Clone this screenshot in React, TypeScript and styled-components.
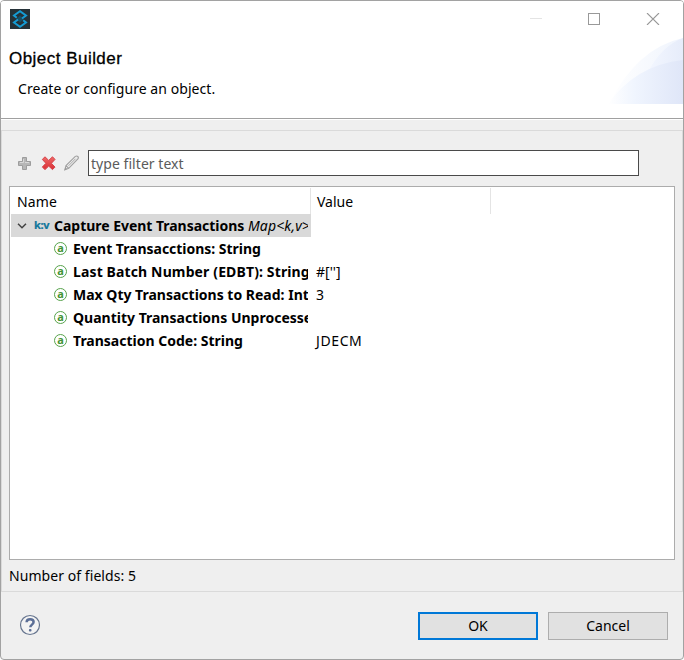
import React from 'react';
import styled, { createGlobalStyle } from 'styled-components';

const Global = createGlobalStyle`
  * { box-sizing: border-box; }
  html, body { margin: 0; background: #fff; overflow: hidden; }
  body { font-family: "Noto Sans", sans-serif; font-size: 14px; line-height: 20px; color: #000; }
`;

const Dialog = styled.div`
  width: 684px;
  height: 660px;
  display: flex;
  flex-direction: column;
  border: 1px solid #a2a2a2;
  border-radius: 4px;
  overflow: hidden;
  background: #efefef;
`;

const Banner = styled.header`
  position: relative;
  flex: none;
  height: 118px;
  background: #fff;
  border-bottom: 1px solid #a0a0a0;
  box-shadow: 0 1px 0 #fff;
`;

const TitleBar = styled.div`
  height: 36px;
  display: flex;
  align-items: center;
  padding: 0 23px 0 9px;
`;

const WindowControls = styled.div`
  display: flex;
  gap: 46px;
  margin-left: auto;
  svg { display: block; }
`;

const Wave = styled.svg`
  position: absolute;
  right: 0;
  top: 36px;
`;

const Title = styled.h1`
  position: relative;
  margin: 11px 0 0 8px;
  font: 500 17px/22px "Liberation Sans", sans-serif;
  -webkit-text-stroke: 0.3px #000;
`;

const Label = styled.span<{ $spacing?: number }>`
  letter-spacing: ${p => p.$spacing ?? 0}px;
  white-space: pre;
`;

const Description = styled.p`
  position: relative;
  margin: 9px 0 0 17px;
`;

const Body = styled.main`
  flex: none;
  height: 462px;
  margin-top: 11px;
  border: 1px solid #dadada;
  padding: 19px 7px 0;
  display: flex;
  flex-direction: column;
`;

const Toolbar = styled.div`
  display: flex;
  height: 26px;
  align-items: center;
  padding-left: 7px;
`;

const Tools = styled.div`
  display: flex;
  gap: 8px;
  margin-right: 8px;
  svg { display: block; }
`;

const FilterInput = styled.div`
  width: 551px;
  height: 26px;
  border: 1px solid #4a4a4a;
  background: #fff;
  color: #5b5b5b;
  padding: 3px 2px 1px;
`;

const Tree = styled.div`
  margin-top: 10px;
  height: 374px;
  width: 666px;
  border: 1px solid #acacac;
  background: #fff;
  padding: 0 1px;
`;

const HeadRow = styled.div`
  display: grid;
  grid-template-columns: 300px 180px 1fr;
  height: 27px;
`;

const HeadCell = styled.div`
  margin-top: 1px;
  border-right: 1px solid #e4e4e4;
  padding: 4px 6px 0;
  &:last-child { border: 0; }
`;

const Row = styled.div`
  display: grid;
  grid-template-columns: 300px 1fr;
  height: 23px;
`;

const NameCell = styled.div<{ $selected?: boolean; $indent: number }>`
  display: flex;
  align-items: center;
  overflow: hidden;
  padding-left: ${p => p.$indent}px;
  background: ${p => (p.$selected ? '#d9d9d9' : 'transparent')};
  svg { flex: none; display: block; }
`;

const NameText = styled.div<{ $gap: number }>`
  flex: 1;
  min-width: 0;
  margin: 0 3px 0 ${p => p.$gap}px;
  overflow: hidden;
  white-space: nowrap;
  font-weight: 700;
  i { font-weight: 400; letter-spacing: 0.15px; }
`;

const ValueCell = styled.div`
  padding: 2px 5px 1px;
`;

const Status = styled.div`
  margin-top: 6px;
`;

const Footer = styled.footer`
  flex: 1;
  display: flex;
  align-items: center;
  padding: 0 15px 0 18px;
  > svg { margin-top: -2px; }
`;

const Buttons = styled.div`
  display: flex;
  gap: 10px;
  margin-left: auto;
`;

const Button = styled.button<{ $primary?: boolean }>`
  width: 120px;
  height: 28px;
  padding: 0;
  border: ${p => (p.$primary ? '2px solid #0078d7' : '1px solid #adadad')};
  background: #e1e1e1;
  color: #000;
  font: inherit;
`;

const AppIcon = () => (
  <svg width="20" height="20" viewBox="0 0 20 20">
    <rect width="20" height="20" fill="#263238" />
    <path d="M10 6.500 13.500 10 10 13.500 6.500 10z" fill="#174f66" />
    <path d="M6.800 8.700 4 6.500 10 2.300l6 4.200-4 3M8 10.500l-4 3 6 4.200 6-4.200-2.800-2.200" fill="none" stroke="#159bd3" strokeWidth="2" />
  </svg>
);

const HeaderWave = () => (
  <Wave width="75" height="67" viewBox="0 0 75 67">
    <defs>
      <linearGradient id="soft"><stop offset="0" stopColor="#fff" /><stop offset="1" stopColor="#eff4fd" /></linearGradient>
      <linearGradient id="mid"><stop offset="0" stopColor="#f3f7ff" /><stop offset="1" stopColor="#e6ecfa" /></linearGradient>
      <linearGradient id="deep"><stop offset="0" stopColor="#fff" /><stop offset=".35" stopColor="#f0f5fe" /><stop offset="1" stopColor="#dfe6f8" /></linearGradient>
    </defs>
    <path d="M1 67Q29 11 75 1V67Z" fill="url(#soft)" />
    <path d="M39 37Q53 9 75 1V60Z" fill="url(#mid)" />
    <path d="M0 67Q28 28 75 23V67Z" fill="url(#deep)" />
  </Wave>
);

const AddIcon = () => (
  <svg width="16" height="16" viewBox="0 0 16 16">
    <path d="M6.500 2.500h4v4h4v4h-4v4h-4v-4h-4v-4h4z" fill="#b6b6b6" stroke="#9d9d9d" />
    <path d="M7.500 4v3.500H4M9 7.500h4" stroke="#d8d8d8" fill="none" />
  </svg>
);

const RemoveIcon = () => (
  <svg width="16" height="16" viewBox="0 0 16 16">
    <defs><linearGradient id="red" x2="0" y2="1"><stop stopColor="#ee6a68" /><stop offset="1" stopColor="#d92f35" /></linearGradient></defs>
    <path d="m5 1.800 3.700 3.600L12.500 1.800l2.500 2.600-3.600 3.900 3.600 3.800-2.500 2.500-3.800-3.500-3.700 3.500-2.700-2.500 3.600-3.800-3.600-3.900z" fill="url(#red)" stroke="#d6434a" strokeLinejoin="round" />
  </svg>
);

const EditIcon = () => (
  <svg width="16" height="16" viewBox="0 0 16 16">
    <path d="m.8 14.800 1.200-4.200L11.300 1.400q1.500-.9 2.500.1 1.100 1.100.1 2.500l-9.200 9.300zM2 10.700l2.500 2.500" fill="#ececec" stroke="#a0a0a0" strokeWidth="1.100" />
    <path d="m4.500 10.800 7-7" stroke="#aaa" />
    <path d="m.5 15 1-2.500L3 14z" fill="#999" />
  </svg>
);

const Chevron = () => (
  <svg width="10" height="8" viewBox="0 0 10 8"><path d="m1 1.800 4 4 4-4" fill="none" stroke="#444" strokeWidth="1.500" /></svg>
);

const MapIcon = styled.span`
  width: 16px;
  margin: -2px 0 0 7px;
  font: 700 11px/16px "Open Sans", sans-serif;
  letter-spacing: -0.4px;
  color: #11779c;
  -webkit-text-stroke: 0.2px #11779c;
  white-space: nowrap;
`;

const AttributeIcon = styled.span`
  flex: none;
  width: 13px;
  height: 13px;
  margin-top: -1px;
  border: 1px solid #57a34c;
  border-radius: 50%;
  color: #439436;
  text-align: center;
  font: 700 11px/9px "Noto Sans", sans-serif;
`;

const HelpIcon = () => (
  <svg width="22" height="22" viewBox="0 0 22 22">
    <circle cx="11" cy="11" r="9.500" fill="#f3f3f3" stroke="#66758f" strokeWidth="1.200" />
    <path d="M7.600 8.300C7.600 6.200 9 5.200 11.100 5.200s3.500 1.100 3.500 2.900c0 2.500-3.300 2.600-3.300 5.200" fill="none" stroke="#5c6f97" strokeWidth="2.500" />
    <rect x="9.900" y="15" width="2.600" height="2.400" rx="1" fill="#5c6f97" />
  </svg>
);

const fields = [
  { name: 'Event Transacctions: String', value: '', spacing: -0.03 },
  { name: 'Last Batch Number (EDBT): String', value: "#['']", spacing: 0.13 },
  { name: 'Max Qty Transactions to Read: Int', value: '3', spacing: 0 },
  { name: 'Quantity Transactions Unprocesse', value: '', spacing: 0 },
  { name: 'Transaction Code: String', value: 'JDECM', spacing: 0 },
];

export default function App() {
  return (
    <>
      <Global />
      <Dialog>
        <Banner>
          <HeaderWave />
          <TitleBar>
            <AppIcon />
            <WindowControls>
              <svg width="12" height="12"><path d="M0 5.500h12" stroke="#e4e4e4" /></svg>
              <svg width="12" height="12"><rect x=".5" y=".5" width="11" height="11" fill="none" stroke="#999" /></svg>
              <svg width="14" height="12"><path d="m1 0 12 12m0-12-12 12" stroke="#999" strokeWidth="1.100" /></svg>
            </WindowControls>
          </TitleBar>
          <Title><Label $spacing={0.47}>Object Builder</Label></Title>
          <Description><Label $spacing={0.06}>Create or configure an object.</Label></Description>
        </Banner>
        <Body>
          <Toolbar>
            <Tools><AddIcon /><RemoveIcon /><EditIcon /></Tools>
            <FilterInput><Label $spacing={0.05}>type filter text</Label></FilterInput>
          </Toolbar>
          <Tree>
            <HeadRow>
              <HeadCell><Label $spacing={0.1}>Name</Label></HeadCell><HeadCell>Value</HeadCell><HeadCell />
            </HeadRow>
            <Row>
              <NameCell $selected $indent={6}>
                <Chevron />
                <MapIcon>k:v</MapIcon>
                <NameText $gap={4}>
                  <Label $spacing={-0.03}>Capture Event Transactions</Label> <i>Map&lt;k,v&gt;</i>
                </NameText>
              </NameCell>
            </Row>
            {fields.map(f => (
              <Row key={f.name}>
                <NameCell $indent={43}>
                  <AttributeIcon>a</AttributeIcon>
                  <NameText $gap={6}><Label $spacing={f.spacing}>{f.name}</Label></NameText>
                </NameCell>
                <ValueCell><Label $spacing={f.value === 'JDECM' ? 0.6 : 0}>{f.value}</Label></ValueCell>
              </Row>
            ))}
          </Tree>
          <Status><Label $spacing={0.06}>Number of fields: 5</Label></Status>
        </Body>
        <Footer>
          <HelpIcon />
          <Buttons>
            <Button $primary>OK</Button>
            <Button>Cancel</Button>
          </Buttons>
        </Footer>
      </Dialog>
    </>
  );
}
